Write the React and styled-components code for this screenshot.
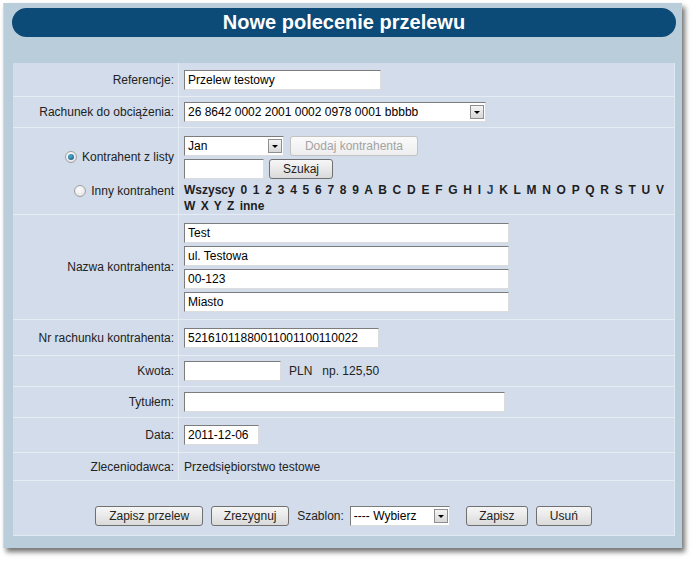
import React from "react";
import styled, { createGlobalStyle } from "styled-components";

const Global = createGlobalStyle`
  html, body { margin: 0; padding: 0; background: #ffffff; }
  body { font-family: "Liberation Sans", Arial, sans-serif; font-size: 12px; color: #222; }
`;

const Page = styled.div`
  width: 695px;
  height: 562px;
  padding: 3px 0 0 3px;
  box-sizing: border-box;
`;

const Panel = styled.div`
  width: 679px;
  height: 545px;
  box-sizing: border-box;
  background: #bacddb;
  border-left: 1px solid #cbd9e4;
  box-shadow: 3px 4px 5px rgba(0, 0, 0, 0.55);
  padding: 5px 6px 0 8px;
  display: flex;
  flex-direction: column;
`;

const Header = styled.div`
  height: 29px;
  border-radius: 15px;
  background: #0c4a78;
  color: #fff;
  font-weight: bold;
  font-size: 20px;
  display: flex;
  align-items: center;
  justify-content: center;
`;

const Form = styled.div`
  margin-top: 26px;
  margin-left: 1px;
  margin-right: 1px;
  background: #d2dcea;
  border-right: 1px solid #e2e9f2;
  border-bottom: 1px solid #e2e9f2;
  display: flex;
  flex-direction: column;
`;

const Row = styled.div`
  display: grid;
  grid-template-columns: 166px 1fr;
  height: ${(p) => p.$h}px;
  border-bottom: 1px solid #e6ecf4;
  box-sizing: border-box;
`;

const Label = styled.div`
  border-right: 1px solid #e6ecf4;
  display: flex;
  align-items: center;
  justify-content: flex-end;
  padding-right: 4px;
  color: #222;
  text-align: right;
`;

const RadioCol = styled(Label)`
  flex-direction: column;
  align-items: flex-end;
  justify-content: flex-start;
  gap: 20px;
  padding-top: 22px;
`;

const Value = styled.div`
  display: flex;
  align-items: center;
  padding: 0 7px 0 5px;
  gap: 8px;
`;

const ValueCol = styled.div`
  display: flex;
  flex-direction: column;
  align-items: flex-start;
  padding: ${(p) => p.$pt || 0}px 7px 0 5px;
  gap: ${(p) => p.$gap || 3}px;
`;

const Line = styled.div`
  display: flex;
  align-items: center;
  gap: ${(p) => p.$gap || 6}px;
`;

const Input = styled.div`
  width: ${(p) => p.$w}px;
  height: 20px;
  box-sizing: border-box;
  background: #fff;
  border: 1px solid #dcdcdc;
  border-top-color: #7c7c7c;
  border-left-color: #7c7c7c;
  padding: 0 3px;
  display: flex;
  align-items: center;
  font-size: 12px;
  color: #000;
  white-space: nowrap;
  overflow: hidden;
`;

const SelectBox = styled(Input)`
  padding: 0 1px 0 3px;
  justify-content: space-between;
`;

const Arrow = styled.span`
  width: 14px;
  height: 14px;
  box-sizing: border-box;
  border: 1px solid #8e8e8e;
  background: linear-gradient(#f4f4f4, #d8d8d8);
  display: flex;
  align-items: center;
  justify-content: center;
  flex-shrink: 0;
  &::after {
    content: "";
    border-left: 3px solid transparent;
    border-right: 3px solid transparent;
    border-top: 3px solid #000;
  }
`;

const Button = styled.div`
  width: ${(p) => p.$w}px;
  height: 20px;
  box-sizing: border-box;
  border: 1px solid ${(p) => (p.$disabled ? "#c2c2c2" : "#707070")};
  border-radius: 3px;
  background: ${(p) =>
    p.$disabled ? "linear-gradient(#fafafa, #eeeeee)" : "linear-gradient(#f6f6f6 0%, #e9e9e9 50%, #d9d9d9 100%)"};
  color: ${(p) => (p.$disabled ? "#a3a3a3" : "#222")};
  display: flex;
  align-items: center;
  justify-content: center;
  font-size: 12px;
  white-space: nowrap;
  flex-shrink: 0;
  margin-left: ${(p) => p.$ml || 0}px;
`;

const RadioItem = styled.div`
  display: flex;
  align-items: center;
  gap: 5px;
  line-height: 14px;
`;

const Radio = styled.span`
  width: 12px;
  height: 12px;
  box-sizing: border-box;
  border-radius: 50%;
  border: 1px solid #a0a0a0;
  background: radial-gradient(circle at 40% 35%, #ffffff, #dcdcdc);
  display: flex;
  align-items: center;
  justify-content: center;
  &::after {
    content: "";
    width: 6px;
    height: 6px;
    border-radius: 50%;
    background: ${(p) => (p.$checked ? "radial-gradient(circle at 40% 35%, #4ab0d8, #1a4f74)" : "transparent")};
  }
`;

const Letters = styled.div`
  width: 480px;
  font-weight: bold;
  font-size: 12px;
  line-height: 16px;
  text-align: justify;
  word-spacing: 2px;
  color: #1e1e1e;
`;

const Letter = styled.span`
  color: ${(p) => (p.$active ? "#1d4170" : "#1e1e1e")};
`;

const Plain = styled.span`
  color: #222;
  white-space: nowrap;
`;

const Footer = styled.div`
  height: 54px;
  display: flex;
  align-items: flex-start;
  justify-content: center;
  padding-top: 25px;
  box-sizing: border-box;
  gap: 8px;
`;

const letters = "Wszyscy 0 1 2 3 4 5 6 7 8 9 A B C D E F G H I J K L M N O P Q R S T U V W X Y Z inne".split(" ");

export default function App() {
  return (
    <>
      <Global />
      <Page>
        <Panel>
          <Header>Nowe polecenie przelewu</Header>
          <Form>
            <Row $h={34}>
              <Label>Referencje:</Label>
              <Value>
                <Input $w={197}>Przelew testowy</Input>
              </Value>
            </Row>
            <Row $h={31}>
              <Label>Rachunek do obciążenia:</Label>
              <Value>
                <SelectBox $w={302}>
                  <span>26 8642 0002 2001 0002 0978 0001 bbbbb</span>
                  <Arrow />
                </SelectBox>
              </Value>
            </Row>
            <Row $h={87}>
              <RadioCol>
                <RadioItem>
                  <Radio $checked />
                  <span>Kontrahent z listy</span>
                </RadioItem>
                <RadioItem>
                  <Radio />
                  <span>Inny kontrahent</span>
                </RadioItem>
              </RadioCol>
              <ValueCol $pt={8} $gap={3}>
                <Line $gap={6}>
                  <SelectBox $w={100}>
                    <span>Jan</span>
                    <Arrow />
                  </SelectBox>
                  <Button $w={128} $disabled>Dodaj kontrahenta</Button>
                </Line>
                <Line $gap={5}>
                  <Input $w={80} />
                  <Button $w={64}>Szukaj</Button>
                </Line>
                <Letters>
                  {letters.map((l, i) => (
                    <React.Fragment key={l}>
                      <Letter $active={l === "J"}>{l}</Letter>
                      {i < letters.length - 1 ? " " : ""}
                    </React.Fragment>
                  ))}
                </Letters>
              </ValueCol>
            </Row>
            <Row $h={105}>
              <Label>Nazwa kontrahenta:</Label>
              <ValueCol $pt={8} $gap={3}>
                <Input $w={325}>Test</Input>
                <Input $w={325}>ul. Testowa</Input>
                <Input $w={325}>00-123</Input>
                <Input $w={325}>Miasto</Input>
              </ValueCol>
            </Row>
            <Row $h={36}>
              <Label>Nr rachunku kontrahenta:</Label>
              <Value>
                <Input $w={195}>52161011880011001100110022</Input>
              </Value>
            </Row>
            <Row $h={31}>
              <Label>Kwota:</Label>
              <Value>
                <Input $w={97} />
                <Plain>PLN&nbsp;&nbsp; np. 125,50</Plain>
              </Value>
            </Row>
            <Row $h={31}>
              <Label>Tytułem:</Label>
              <Value>
                <Input $w={321} />
              </Value>
            </Row>
            <Row $h={35}>
              <Label>Data:</Label>
              <Value>
                <Input $w={75}>2011-12-06</Input>
              </Value>
            </Row>
            <Row $h={28}>
              <Label>Zleceniodawca:</Label>
              <Value>
                <Plain>Przedsiębiorstwo testowe</Plain>
              </Value>
            </Row>
            <Footer>
              <Button $w={108}>Zapisz przelew</Button>
              <Button $w={78}>Zrezygnuj</Button>
              <Line $gap={6}>
                <Plain>Szablon:</Plain>
                <SelectBox $w={100}>
                  <span>---- Wybierz</span>
                  <Arrow />
                </SelectBox>
              </Line>
              <Button $w={62} $ml={8}>Zapisz</Button>
              <Button $w={56}>Usuń</Button>
            </Footer>
          </Form>
        </Panel>
      </Page>
    </>
  );
}
